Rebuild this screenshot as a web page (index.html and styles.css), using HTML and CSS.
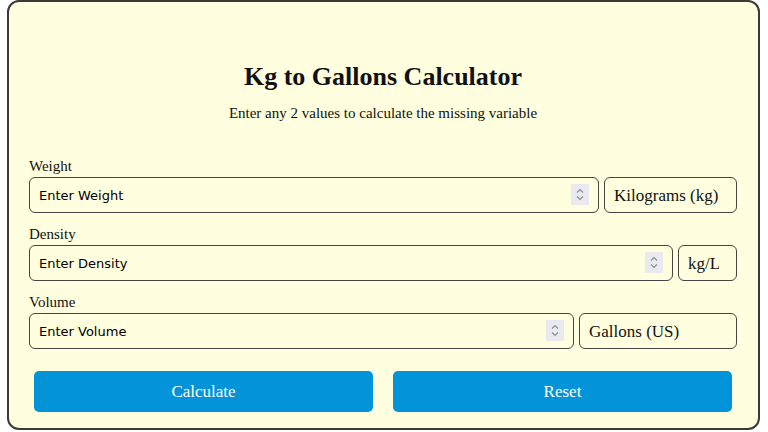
FILE: index.html
```html
<!DOCTYPE html>
<html lang="en">
<head>
  <meta charset="UTF-8">
  <title>Kg to Gallons Calculator</title>
  <link rel="stylesheet" href="styles.css">
</head>
<body>
  <div class="calc-container">
    <h1>Kg to Gallons Calculator</h1>
    <p class="subtitle">Enter any 2 values to calculate the missing variable</p>

    <form id="calcForm">
      <div class="form-group">
        <label for="weight">Weight</label>
        <div class="input-row">
          <div class="input-wrap">
            <input type="number" id="weight" placeholder="Enter Weight">
            <span class="spin"><svg width="18" height="21" viewBox="0 0 18 21"><path d="M6 8.5l3-3 3 3M6 12.5l3 3 3-3" fill="none" stroke="#8c8c94" stroke-width="1.1"/></svg></span>
          </div>
          <select id="weightUnit" class="unit-select unit-weight">
            <option>Kilograms (kg)</option>
            <option>Pounds (lb)</option>
            <option>Grams (g)</option>
          </select>
        </div>
      </div>

      <div class="form-group">
        <label for="density">Density</label>
        <div class="input-row">
          <div class="input-wrap">
            <input type="number" id="density" placeholder="Enter Density">
            <span class="spin"><svg width="18" height="21" viewBox="0 0 18 21"><path d="M6 8.5l3-3 3 3M6 12.5l3 3 3-3" fill="none" stroke="#8c8c94" stroke-width="1.1"/></svg></span>
          </div>
          <select id="densityUnit" class="unit-select unit-density">
            <option>kg/L</option>
            <option>g/L</option>
          </select>
        </div>
      </div>

      <div class="form-group">
        <label for="volume">Volume</label>
        <div class="input-row">
          <div class="input-wrap">
            <input type="number" id="volume" placeholder="Enter Volume">
            <span class="spin"><svg width="18" height="21" viewBox="0 0 18 21"><path d="M6 8.5l3-3 3 3M6 12.5l3 3 3-3" fill="none" stroke="#8c8c94" stroke-width="1.1"/></svg></span>
          </div>
          <select id="volumeUnit" class="unit-select unit-volume">
            <option>Gallons (US)</option>
            <option>Gallons (Imperial)</option>
            <option>Liters (L)</option>
          </select>
        </div>
      </div>

      <div class="button-row">
        <button type="button" class="calc-btn" id="calcBtn">Calculate</button>
        <button type="reset" class="calc-btn">Reset</button>
      </div>
    </form>
  </div>

  <script>
    document.getElementById('calcBtn').addEventListener('click', function() {
      const w = parseFloat(document.getElementById('weight').value);
      const d = parseFloat(document.getElementById('density').value);
      const v = parseFloat(document.getElementById('volume').value);
      const LITERS_PER_GALLON = 3.78541;

      if (!isNaN(w) && !isNaN(d)) {
        document.getElementById('volume').value = (w / d / LITERS_PER_GALLON).toFixed(4);
      } else if (!isNaN(w) && !isNaN(v)) {
        document.getElementById('density').value = (w / (v * LITERS_PER_GALLON)).toFixed(4);
      } else if (!isNaN(d) && !isNaN(v)) {
        document.getElementById('weight').value = (d * v * LITERS_PER_GALLON).toFixed(4);
      }
    });
  </script>
</body>
</html>
```

FILE: styles.css
```css
body {
  font-family: "Liberation Serif", "Times New Roman", serif;
  background: white;
  margin: 0;
  padding: 0;
}
.calc-container {
  background: #fffedf;
  border: 2px solid #3a3a3a;
  border-radius: 12px;
  margin: 0 8px 0 7px;
  padding: 0 21px 16px 20px;
  color: #111;
}
.calc-container h1 {
  text-align: center;
  font-size: 26px;
  line-height: 30px;
  margin: 60px 0 0 0;
}
.subtitle {
  text-align: center;
  font-size: 15px;
  line-height: 17px;
  margin: 13px 0 35px 0;
}
.form-group {
  margin-bottom: 12px;
}
.form-group label {
  display: block;
  font-size: 15px;
  line-height: 18px;
  margin-bottom: 2px;
}
.input-row {
  display: flex;
  gap: 5px;
}
.input-wrap {
  flex: 1;
  min-width: 0;
  position: relative;
}
.input-wrap input {
  width: 100%;
  height: 36px;
  box-sizing: border-box;
  padding: 0 34px 0 9px;
  border: 1px solid #444;
  border-radius: 6px;
  background: transparent;
  font-family: "DejaVu Sans", Verdana, sans-serif;
  font-size: 13px;
  color: #000;
  -moz-appearance: textfield;
}
.input-wrap input::placeholder {
  color: #000;
}
.input-wrap input::-webkit-inner-spin-button,
.input-wrap input::-webkit-outer-spin-button {
  -webkit-appearance: none;
  margin: 0;
}
.spin {
  position: absolute;
  right: 10px;
  top: 7px;
  width: 18px;
  height: 21px;
  background: #e9e9ef;
  pointer-events: none;
}
.spin svg {
  display: block;
}
.unit-select {
  appearance: none;
  -webkit-appearance: none;
  height: 36px;
  box-sizing: border-box;
  padding: 0 17px 0 9px;
  border: 1px solid #444;
  border-radius: 6px;
  background: transparent;
  font-family: "Liberation Serif", "Times New Roman", serif;
  font-size: 17px;
  color: #111;
}
.unit-weight {
  width: 133px;
}
.unit-density {
  width: 59px;
}
.unit-volume {
  width: 158px;
}
.button-row {
  display: flex;
  gap: 20px;
  padding: 0 5px;
  margin-top: 22px;
}
.calc-btn {
  flex: 1;
  height: 41px;
  background: #0293d8;
  color: white;
  border: none;
  border-radius: 5px;
  font-family: "Liberation Serif", "Times New Roman", serif;
  font-size: 17px;
  cursor: pointer;
}
.calc-btn:hover {
  background: #0283c2;
}
```
